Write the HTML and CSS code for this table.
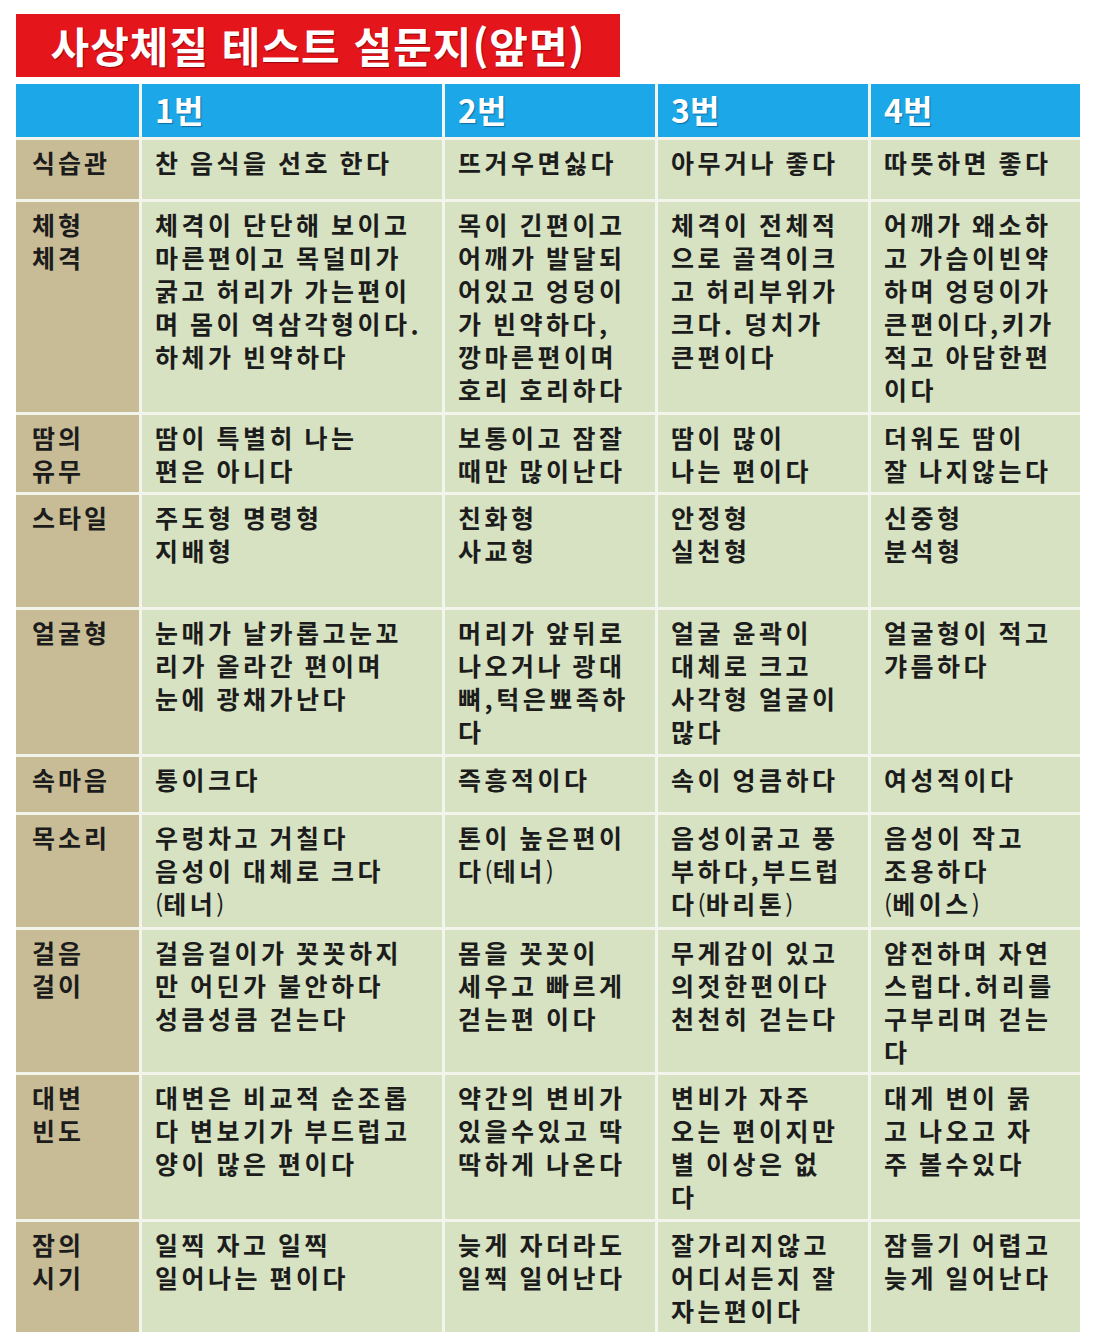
FILE: index.html
```html
<!DOCTYPE html>
<html lang="ko">
<head>
<meta charset="utf-8">
<link rel="stylesheet" href="styles.css">
</head>
<body>
<div class="page">
  <div class="title">사상체질 테스트 설문지(앞면)</div>
  <div class="table">
    <div class="hd hd-empty"></div>
    <div class="hd">1번</div>
    <div class="hd">2번</div>
    <div class="hd">3번</div>
    <div class="hd">4번</div>

    <div class="lb">식습관</div>
    <div class="cl">찬 음식을 선호 한다</div>
    <div class="cl">뜨거우면싫다</div>
    <div class="cl">아무거나 좋다</div>
    <div class="cl">따뜻하면 좋다</div>

    <div class="lb">체형<br>체격</div>
    <div class="cl">체격이 단단해 보이고<br>마른편이고 목덜미가<br>굵고 허리가 가는편이<br>며 몸이 역삼각형이다.<br>하체가 빈약하다</div>
    <div class="cl">목이 긴편이고<br>어깨가 발달되<br>어있고 엉덩이<br>가 빈약하다,<br>깡마른편이며<br>호리 호리하다</div>
    <div class="cl">체격이 전체적<br>으로 골격이크<br>고 허리부위가<br>크다. 덩치가<br>큰편이다</div>
    <div class="cl">어깨가 왜소하<br>고 가슴이빈약<br>하며 엉덩이가<br>큰편이다,키가<br>적고 아담한편<br>이다</div>

    <div class="lb">땀의<br>유무</div>
    <div class="cl">땀이 특별히 나는<br>편은 아니다</div>
    <div class="cl">보통이고 잠잘<br>때만 많이난다</div>
    <div class="cl">땀이 많이<br>나는 편이다</div>
    <div class="cl">더워도 땀이<br>잘 나지않는다</div>

    <div class="lb">스타일</div>
    <div class="cl">주도형 명령형<br>지배형</div>
    <div class="cl">친화형<br>사교형</div>
    <div class="cl">안정형<br>실천형</div>
    <div class="cl">신중형<br>분석형</div>

    <div class="lb">얼굴형</div>
    <div class="cl">눈매가 날카롭고눈꼬<br>리가 올라간 편이며<br>눈에 광채가난다</div>
    <div class="cl">머리가 앞뒤로<br>나오거나 광대<br>뼈,턱은뾰족하<br>다</div>
    <div class="cl">얼굴 윤곽이<br>대체로 크고<br>사각형 얼굴이<br>많다</div>
    <div class="cl">얼굴형이 적고<br>갸름하다</div>

    <div class="lb">속마음</div>
    <div class="cl">통이크다</div>
    <div class="cl">즉흥적이다</div>
    <div class="cl">속이 엉큼하다</div>
    <div class="cl">여성적이다</div>

    <div class="lb">목소리</div>
    <div class="cl">우렁차고 거칠다<br>음성이 대체로 크다<br><span class="par">(</span>테너<span class="par">)</span></div>
    <div class="cl">톤이 높은편이<br>다<span class="par">(</span>테너<span class="par">)</span></div>
    <div class="cl">음성이굵고 풍<br>부하다,부드럽<br>다<span class="par">(</span>바리톤<span class="par">)</span></div>
    <div class="cl">음성이 작고<br>조용하다<br><span class="par">(</span>베이스<span class="par">)</span></div>

    <div class="lb">걸음<br>걸이</div>
    <div class="cl">걸음걸이가 꼿꼿하지<br>만 어딘가 불안하다<br>성큼성큼 걷는다</div>
    <div class="cl">몸을 꼿꼿이<br>세우고 빠르게<br>걷는편 이다</div>
    <div class="cl">무게감이 있고<br>의젓한편이다<br>천천히 걷는다</div>
    <div class="cl">얌전하며 자연<br>스럽다.허리를<br>구부리며 걷는<br>다</div>

    <div class="lb">대변<br>빈도</div>
    <div class="cl">대변은 비교적 순조롭<br>다 변보기가 부드럽고<br>양이 많은 편이다</div>
    <div class="cl">약간의 변비가<br>있을수있고 딱<br>딱하게 나온다</div>
    <div class="cl">변비가 자주<br>오는 편이지만<br>별 이상은 없<br>다</div>
    <div class="cl">대게 변이 묽<br>고 나오고 자<br>주 볼수있다</div>

    <div class="lb">잠의<br>시기</div>
    <div class="cl">일찍 자고 일찍<br>일어나는 편이다</div>
    <div class="cl">늦게 자더라도<br>일찍 일어난다</div>
    <div class="cl">잘가리지않고<br>어디서든지 잘<br>자는편이다</div>
    <div class="cl">잠들기 어렵고<br>늦게 일어난다</div>
  </div>
</div>
</body>
</html>
```

FILE: styles.css
```css
html, body {
  margin: 0;
  padding: 0;
  background: #ffffff;
}

.page {
  width: 1096px;
  height: 1336px;
  overflow: hidden;
  padding: 14px 0 0 16px;
  box-sizing: border-box;
  font-family: "Noto Sans CJK KR", "Noto Sans", sans-serif;
}

.title {
  width: 604px;
  height: 63px;
  background: #e5151c;
  color: #ffffff;
  font-weight: 700;
  font-size: 42px;
  line-height: 62px;
  text-align: center;
  letter-spacing: 1px;
  text-shadow: 1px 1px 1px rgba(90, 0, 0, 0.6);
  box-sizing: border-box;
}

.table {
  margin-top: 7px;
  display: grid;
  grid-template-columns: 123px 300px 210px 210px 209px;
  grid-template-rows: 53px 59px 210px 77px 112px 144px 55px 112px 142px 144px 110px;
  gap: 3px;
  background: #f3f5ec;
  width: 1064px;
}

.hd {
  background: #1ca7e8;
  color: #ffffff;
  font-weight: 700;
  font-size: 32px;
  line-height: 50px;
  padding-left: 13px;
  text-shadow: 1px 1px 1px rgba(0, 50, 90, 0.5);
}

.lb {
  background: #c8bc97;
  color: #1c1c1c;
  font-weight: 700;
  font-size: 25px;
  line-height: 33px;
  letter-spacing: 3px;
  padding: 6px 0 0 16px;
}

.cl {
  background: #d6e2c1;
  color: #1c1c1c;
  font-weight: 700;
  font-size: 25px;
  line-height: 33px;
  letter-spacing: 3.5px;
  word-spacing: -2px;
  padding: 6px 0 0 13px;
  white-space: nowrap;
}

.par {
  font-weight: 400;
  font-size: 24px;
  letter-spacing: 0;
}
```
